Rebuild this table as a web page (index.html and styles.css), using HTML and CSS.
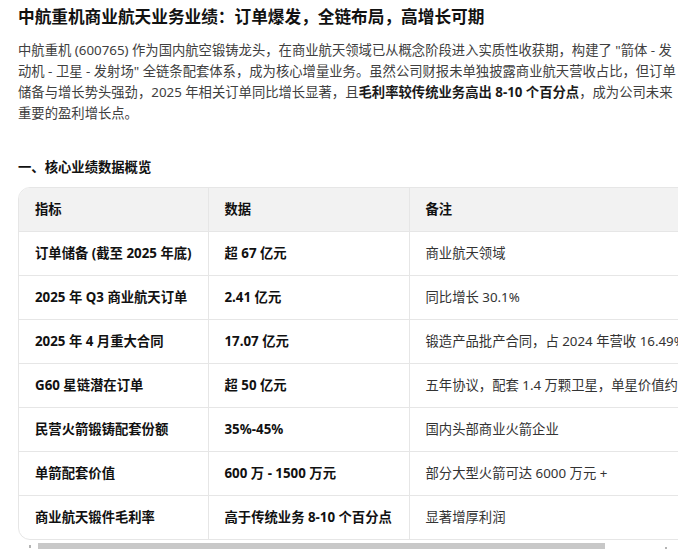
FILE: index.html
```html
<!DOCTYPE html>
<html lang="zh-CN">
<head>
<meta charset="utf-8">
<title>中航重机商业航天业务业绩</title>
<link rel="stylesheet" href="styles.css">
</head>
<body>
<div class="page">
  <h1 class="title">中航重机商业航天业务业绩：订单爆发，全链布局，高增长可期</h1>
  <p class="intro">中航重机 (600765) 作为国内航空锻铸龙头，在商业航天领域已从概念阶段进入实质性收获期，构建了 "箭体 - 发动机 - 卫星 - 发射场" 全链条配套体系，成为核心增量业务。虽然公司财报未单独披露商业航天营收占比，但订单储备与增长势头强劲，2025 年相关订单同比增长显著，且<strong class="em">毛利率较传统业务高出 8-10 个百分点</strong>，成为公司未来重要的盈利增长点。</p>
  <h2 class="section">一、核心业绩数据概览</h2>
  <div class="scroller">
    <div class="table-box">
      <table class="data">
        <colgroup>
          <col class="c1">
          <col class="c2">
          <col class="c3">
        </colgroup>
        <thead>
          <tr><th>指标</th><th>数据</th><th>备注</th></tr>
        </thead>
        <tbody>
          <tr><td class="k">订单储备 (截至 2025 年底)</td><td class="v">超 67 亿元</td><td>商业航天领域</td></tr>
          <tr><td class="k">2025 年 Q3 商业航天订单</td><td class="v">2.41 亿元</td><td>同比增长 30.1%</td></tr>
          <tr><td class="k">2025 年 4 月重大合同</td><td class="v">17.07 亿元</td><td>锻造产品批产合同，占 2024 年营收 16.49%</td></tr>
          <tr><td class="k">G60 星链潜在订单</td><td class="v">超 50 亿元</td><td>五年协议，配套 1.4 万颗卫星，单星价值约 36 万元</td></tr>
          <tr><td class="k">民营火箭锻铸配套份额</td><td class="v">35%-45%</td><td>国内头部商业火箭企业</td></tr>
          <tr><td class="k">单箭配套价值</td><td class="v">600 万 - 1500 万元</td><td>部分大型火箭可达 6000 万元 +</td></tr>
          <tr class="last"><td class="k">商业航天锻件毛利率</td><td class="v">高于传统业务 8-10 个百分点</td><td>显著增厚利润</td></tr>
        </tbody>
      </table>
    </div>
  </div>
  <div class="hscroll" aria-hidden="true">
    <span class="hs-btn hs-left"><span class="hs-arrow"></span></span>
    <span class="hs-thumb"></span>
    <span class="hs-rest"></span>
    <span class="hs-btn hs-right"><span class="hs-arrow"></span></span>
  </div>
</div>
</body>
</html>
```

FILE: styles.css
```css
html, body {
  margin: 0;
  padding: 0;
  background: #ffffff;
}

body {
  font-family: "Noto Sans", "Noto Sans CJK SC", sans-serif;
  color: #222222;
}

.page {
  padding: 5px 16px 0 18px;
}

.title {
  margin: 0;
  font-size: 16.67px;
  line-height: 24px;
  font-weight: 700;
  color: #111111;
}

.intro {
  margin: 11px 0 0;
  font-size: 13.33px;
  line-height: 21px;
  color: #404040;
}

.em {
  font-weight: 700;
  color: #1a1a1a;
}

.section {
  margin: 33px 0 0;
  font-size: 13.33px;
  line-height: 20px;
  font-weight: 700;
  color: #111111;
}

.scroller {
  margin-top: 10px;
  overflow: hidden;
}

.table-box {
  width: 720px;
  border: 1px solid #e6e6e6;
  border-radius: 12px;
  overflow: hidden;
}

.data {
  width: 100%;
  border-collapse: collapse;
  table-layout: fixed;
  font-size: 13.33px;
  white-space: nowrap;
}

.c1 { width: 189px; }
.c2 { width: 201px; }

.data th,
.data td {
  text-align: left;
  padding: 12px 16px;
  line-height: 19px;
  border-bottom: 1px solid #e6e6e6;
  border-right: 1px solid #e6e6e6;
  overflow: hidden;
}

.data th:last-child,
.data td:last-child {
  border-right: none;
}

.data .last td {
  border-bottom: none;
}

.data th {
  background: #f2f2f2;
  font-weight: 700;
  color: #111111;
}

.data td {
  color: #333333;
}

.data td.k,
.data td.v {
  font-weight: 700;
  color: #111111;
}

/* fake horizontal scrollbar */
.hscroll {
  display: flex;
  height: 12px;
  margin-top: 3px;
  background: #ffffff;
}

.hs-btn {
  flex: 0 0 20px;
  position: relative;
}

.hs-arrow {
  position: absolute;
  width: 2px;
  height: 3px;
  background: #b4b4b4;
}

.hs-left .hs-arrow {
  left: 11px;
  top: 2px;
}

.hs-right .hs-arrow {
  left: 7px;
  top: 4px;
}

.hs-thumb {
  flex: 0 0 567px;
  background: #c8c8c8;
}

.hs-rest {
  flex: 1 1 auto;
}
```
